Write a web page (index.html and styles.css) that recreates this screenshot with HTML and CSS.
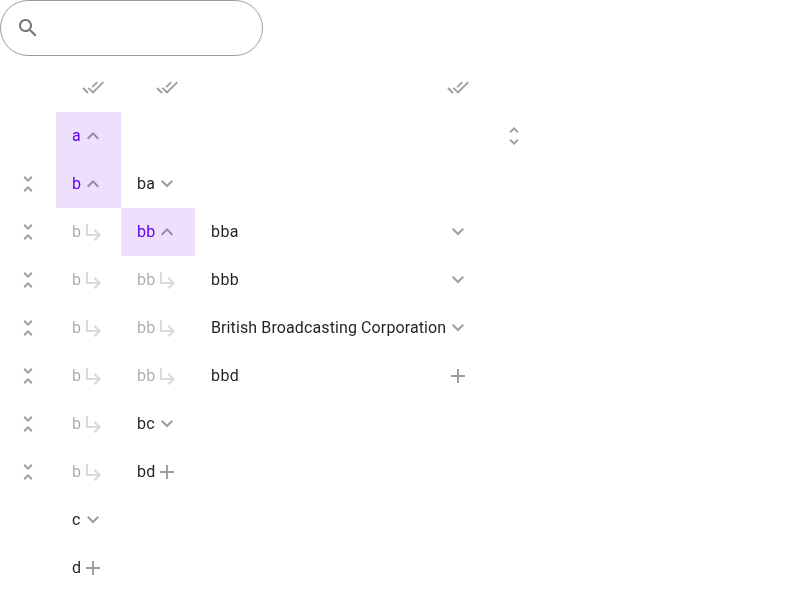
FILE: index.html
```
<!DOCTYPE html>
<html lang="en">
<head>
<meta charset="utf-8">
<title>Tree table</title>
<link rel="stylesheet" href="styles.css">
</head>
<body>
<svg class="defs" width="0" height="0">
<symbol id="search" viewBox="0 0 24 24"><path d="M15.5 14h-.79l-.28-.27C15.41 12.59 16 11.11 16 9.5 16 5.91 13.09 3 9.5 3S3 5.91 3 9.5 5.91 16 9.5 16c1.61 0 3.09-.59 4.23-1.57l.27.28v.79l5 4.99L20.49 19l-4.99-5zm-6 0C7.01 14 5 11.99 5 9.5S7.01 5 9.5 5 14 7.01 14 9.5 11.99 14 9.5 14z"/></symbol>
<symbol id="all" viewBox="0 0 24 24"><path fill="none" stroke="currentColor" stroke-width="1.9" d="M2 12l5 5M7.3 11.8l4.7 4.7L22.3 6.2M11.2 11.2l5-5"/></symbol>
<symbol id="less" viewBox="0 0 24 24"><path d="M12 8l-6 6 1.41 1.41L12 10.83l4.59 4.58L18 14z"/></symbol>
<symbol id="more" viewBox="0 0 24 24"><path d="M16.59 8L12 12.58 7.41 8 6 9.41l6 6 6-6z"/></symbol>
<symbol id="add" viewBox="0 0 24 24"><path d="M19 13h-6v6h-2v-6H5v-2h6V5h2v6h6v2z"/></symbol>
<symbol id="sub" viewBox="0 0 24 24"><path d="M20 15l-6 6-1.42-1.42L16.17 16H5V4h2v10h9.17l-3.59-3.58L14 9l6 6z"/></symbol>
<symbol id="fold" viewBox="0 0 24 24"><path d="M7.41 18.59L8.83 20 12 16.83 15.17 20l1.41-1.41L12 14l-4.59 4.59zm9.18-13.18L15.17 4 12 7.17 8.83 4 7.41 5.41 12 10l4.59-4.59z"/></symbol>
<symbol id="unfold" viewBox="0 0 24 24"><path d="M12 5.83L15.17 9l1.41-1.41L12 3 7.41 7.59 8.83 9 12 5.83zm0 12.34L8.83 15l-1.41 1.41L12 21l4.59-4.59L15.17 15 12 18.17z"/></symbol>
</svg>
<label class="search"><svg><use href="#search"/></svg><input aria-label="Search"></label>
<main class="grid" id="grid"></main>
<script src="script.js"></script>
</body>
</html>
```
FILE: styles.css
```
body {
  margin: 0;
  height: 600px;
  overflow: hidden;
  background: #fff;
  color: rgba(0, 0, 0, .87);
  font: 16px/24px Roboto, sans-serif;
  letter-spacing: .15px;
}
.defs { display: none; }
svg { display: block; flex: none; width: 24px; height: 24px; fill: currentColor; }
.search {
  box-sizing: border-box;
  display: flex;
  align-items: center;
  width: 263px;
  height: 56px;
  padding: 0 15px;
  border: 1px solid #9e9e9e;
  border-radius: 28px;
}
.search svg { color: rgba(0, 0, 0, .54); }
.search input { min-width: 0; flex: 1; border: 0; outline: 0; background: none; font: inherit; }
.grid {
  display: grid;
  grid-template-columns: 56px 65px 74px 291px 56px;
  grid-auto-rows: 48px;
  padding-top: 8px;
  will-change: transform;
}
.cell { display: flex; align-items: center; padding: 0 16px; white-space: nowrap; }
.cell svg { margin-left: auto; color: rgba(0, 0, 0, .38); }
.cell.selected { background: #eee0fd; color: #6200ee; }
.cell.parent { color: rgba(0, 0, 0, .33); }
.cell.parent svg { color: rgba(0, 0, 0, .15); }
.cell.edge svg { margin: 0; }
.cell:nth-child(5n + 4) { letter-spacing: .11px; }
.cell.short { letter-spacing: .4px; }
```
FILE: script.js
```
const fold = ":fold";
const rows = [
  ["", ":all", ":all", ":all", ""],
  ["", "a:less:selected", "", "", ":unfold"],
  [fold, "b:less:selected", "ba:more", "", ""],
  [fold, "b:sub:parent", "bb:less:selected", "bba:more:short", ""],
  [fold, "b:sub:parent", "bb:sub:parent", "bbb:more:short", ""],
  [fold, "b:sub:parent", "bb:sub:parent", "British Broadcasting Corporation:more", ""],
  [fold, "b:sub:parent", "bb:sub:parent", "bbd:add:short", ""],
  [fold, "b:sub:parent", "bc:more", "", ""],
  [fold, "b:sub:parent", "bd:add", "", ""],
  ["", "c:more", "", "", ""],
  ["", "d:add", "", "", ""]
];
document.getElementById("grid").innerHTML = rows.map(row => row.map((value, column) => {
  const [text, icon, state = ""] = value.split(":");
  const edge = column === 0 || column === 4 ? "edge" : "";
  return `<div class="cell ${state} ${edge}"><span>${text}</span>${icon ? `<svg><use href="#${icon}"/></svg>` : ""}</div>`;
}).join("")).join("");
```
